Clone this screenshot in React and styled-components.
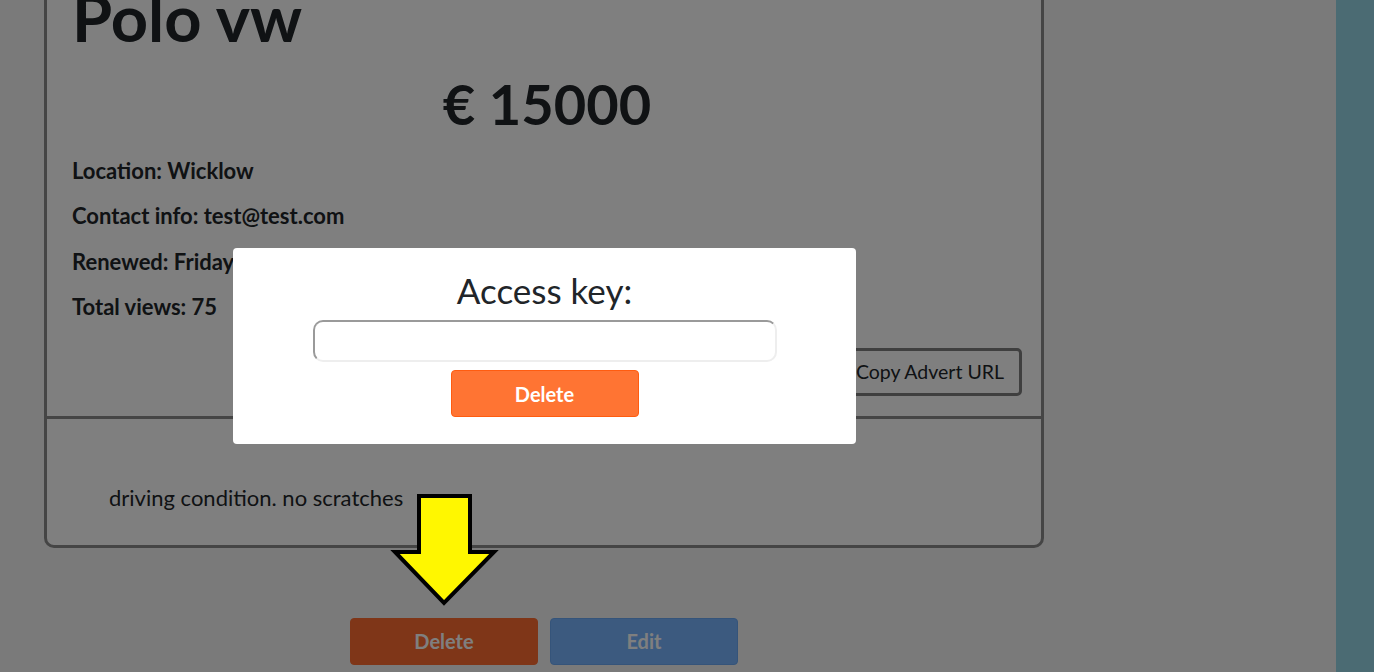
import React from "react";
import styled, { createGlobalStyle } from "styled-components";

const GlobalStyle = createGlobalStyle`
  html, body {
    margin: 0;
    padding: 0;
    height: 100%;
    overflow: hidden;
    background: #f4f4f4;
  }
  body {
    font-family: Lato, "Open Sans", sans-serif;
    color: #212529;
  }
`;

const App = () => {
  return (
    <>
      <GlobalStyle />
      <Page>
        <Main>
          <Card>
            <CardTop>
              <Title>Polo vw</Title>
              <Price>€ 15000</Price>
              <Info>Location: Wicklow</Info>
              <Info>Contact info: test@test.com</Info>
              <Info>Renewed: Friday</Info>
              <Info>Total views: 75</Info>
              <Actions>
                <OutlineButton>Copy Advert URL</OutlineButton>
              </Actions>
            </CardTop>
            <CardBody>
              <Description>driving condition. no scratches</Description>
            </CardBody>
          </Card>
          <ButtonRow>
            <Button $variant="danger">Delete</Button>
            <Button $variant="info">Edit</Button>
          </ButtonRow>
        </Main>
        <Sidebar />
      </Page>

      <Overlay>
        <Modal>
          <ModalTitle>Access key:</ModalTitle>
          <KeyInput type="password" />
          <Button $variant="modal">Delete</Button>
        </Modal>
      </Overlay>

      <Arrow viewBox="0 0 110 120" width="110" height="120">
        <path
          d="M29 4 H80 V60 H104 L54 111 L5 60 H29 Z"
          fill="#fff700"
          stroke="#000"
          strokeWidth="4"
          strokeLinejoin="miter"
        />
      </Arrow>
    </>
  );
};

export default App;

const Page = styled.div`
  display: flex;
  min-height: 672px;
`;

const Main = styled.div`
  flex: 1;
  padding-left: 44px;
`;

const Sidebar = styled.div`
  width: 38px;
  background: #96d6e6;
`;

const Card = styled.div`
  width: 1000px;
  box-sizing: border-box;
  margin-top: -30px;
  background: #fff;
  border: 3px solid #8a8a8a;
  border-radius: 10px;
`;

const CardTop = styled.div`
  padding: 5px 19px 20px 25px;
  border-bottom: 3px solid #8a8a8a;
`;

const Title = styled.h1`
  margin: 0;
  font-size: 65px;
  line-height: 78px;
  font-weight: 700;
`;

const Price = styled.div`
  margin: 12px 0 14px;
  text-align: center;
  font-size: 56px;
  line-height: 72px;
  font-weight: 700;
`;

const Info = styled.p`
  margin: 0 0 12.3px;
  font-size: 22px;
  line-height: 33px;
  font-weight: 700;
`;

const Actions = styled.div`
  display: flex;
  justify-content: flex-end;
  margin-top: 25px;
`;

const OutlineButton = styled.button`
  height: 48px;
  padding: 0 15px;
  background: transparent;
  border: 3px solid #7e7e7e;
  border-radius: 5px;
  font-family: Lato, sans-serif;
  font-size: 19.5px;
  color: #212529;
`;

const CardBody = styled.div`
  padding: 62px 62px 31px;
`;

const Description = styled.p`
  margin: 0;
  font-size: 22px;
  line-height: 33px;
`;

const ButtonRow = styled.div`
  width: 1000px;
  display: flex;
  justify-content: center;
  gap: 12px;
  margin-top: 70px;
`;

const variants = {
  danger: { bg: "#fe6c30", border: "#fe6c30" },
  info: { bg: "#79b4fe", border: "#6aa8f4" },
  modal: { bg: "#ff7433", border: "#ff5c10" },
};

const Button = styled.button`
  width: 188px;
  height: 47px;
  background: ${(p) => variants[p.$variant].bg};
  border: 1px solid ${(p) => variants[p.$variant].border};
  border-radius: 4px;
  color: #fff;
  font-family: Lato, sans-serif;
  font-size: 20px;
  font-weight: 700;
`;

const Overlay = styled.div`
  position: fixed;
  inset: 0;
  background: rgba(0, 0, 0, 0.5);
`;

const Modal = styled.div`
  position: absolute;
  left: 233px;
  top: 248px;
  width: 623px;
  height: 196px;
  box-sizing: border-box;
  padding-top: 19px;
  background: #fff;
  border-radius: 4px;
  display: flex;
  flex-direction: column;
  align-items: center;
`;

const ModalTitle = styled.div`
  font-size: 35px;
  line-height: 46px;
  color: #212529;
  margin-bottom: 7px;
`;

const KeyInput = styled.input`
  width: 464px;
  height: 42px;
  box-sizing: border-box;
  margin-bottom: 8px;
  border: 2px solid;
  border-color: #9a9a9a #eeeeee #eeeeee #9a9a9a;
  border-radius: 10px;
  outline: none;
`;

const Arrow = styled.svg`
  position: fixed;
  left: 390px;
  top: 492px;
`;
